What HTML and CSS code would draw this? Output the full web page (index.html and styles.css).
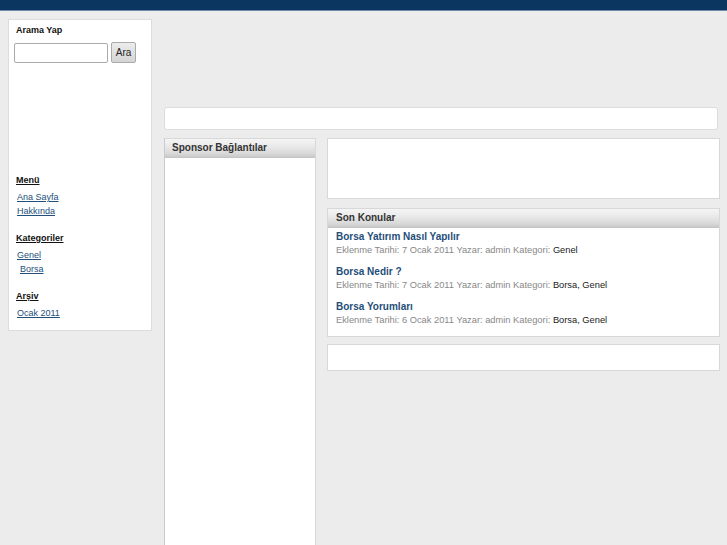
FILE: index.html
```html
<!DOCTYPE html>
<html lang="tr">
<head>
<meta charset="utf-8">
<title>Borsa</title>
<link rel="stylesheet" href="styles.css">
</head>
<body>
<div class="topbar"></div>
<div class="page">
  <aside class="sidebar">
    <h3 class="search-title">Arama Yap</h3>
    <form class="search">
      <input type="text" class="search-input">
      <button type="button" class="search-btn">Ara</button>
    </form>
    <div class="side-gap"></div>
    <h4 class="side-head">Menü</h4>
    <ul class="side-list">
      <li><a href="#">Ana Sayfa</a></li>
      <li><a href="#">Hakkında</a></li>
    </ul>
    <h4 class="side-head">Kategoriler</h4>
    <ul class="side-list">
      <li><a href="#">Genel</a></li>
      <li class="indent"><a href="#">Borsa</a></li>
    </ul>
    <h4 class="side-head">Arşiv</h4>
    <ul class="side-list">
      <li><a href="#">Ocak 2011</a></li>
    </ul>
  </aside>
  <main class="main">
    <div class="banner-space"></div>
    <div class="bar"></div>
    <div class="cols">
      <section class="sponsor">
        <div class="box-head">Sponsor Bağlantılar</div>
      </section>
      <div class="right">
        <div class="box ad"></div>
        <section class="box recent">
          <div class="box-head">Son Konular</div>
          <div class="posts">
            <div class="post">
              <a class="post-title" href="#">Borsa Yatırım Nasıl Yapılır</a>
              <div class="meta">Eklenme Tarihi: 7 Ocak 2011 Yazar: admin Kategori: <span class="cat">Genel</span></div>
            </div>
            <div class="post">
              <a class="post-title" href="#">Borsa Nedir ?</a>
              <div class="meta">Eklenme Tarihi: 7 Ocak 2011 Yazar: admin Kategori: <span class="cat">Borsa, Genel</span></div>
            </div>
            <div class="post">
              <a class="post-title" href="#">Borsa Yorumları</a>
              <div class="meta">Eklenme Tarihi: 6 Ocak 2011 Yazar: admin Kategori: <span class="cat">Borsa, Genel</span></div>
            </div>
          </div>
        </section>
        <div class="box small"></div>
      </div>
    </div>
  </main>
</div>
</body>
</html>
```
FILE: styles.css
```css
* { box-sizing: border-box; }
html, body { margin: 0; padding: 0; }
body {
  background: #ececec;
  font-family: "Liberation Sans", Arial, sans-serif;
  font-size: 10px;
  color: #333;
  overflow: hidden;
  height: 545px;
}
.topbar {
  height: 11px;
  background: #0b365f;
  border-bottom: 1px solid #6e8aa8;
}
.page {
  display: flex;
  align-items: flex-start;
  padding: 8px 8px 0 8px;
  gap: 12px;
}
.sidebar {
  width: 144px;
  flex: none;
  background: #fff;
  border: 1px solid #dcdcdc;
  padding: 5px 7px 10px 7px;
  height: 312px;
}
.search-title {
  margin: 0 0 7px 0;
  font-size: 9px;
  font-weight: bold;
  color: #111;
}
.search {
  display: flex;
  align-items: center;
  gap: 3px;
}
.search-input {
  width: 94px;
  height: 20px;
  border: 1px solid #aaa;
  border-radius: 2px;
  padding: 0;
  margin: 0 0 0 -2px;
}
.search-btn {
  width: 25px;
  height: 21px;
  padding: 0;
  font-family: "Liberation Sans", Arial, sans-serif;
  font-size: 10px;
  color: #222;
  border: 1px solid #aaa;
  border-radius: 2px;
  background: linear-gradient(#ececec, #d4d4d4);
}
.side-gap { height: 112px; }
.side-head {
  margin: 0 0 5px 0;
  font-size: 9px;
  font-weight: bold;
  color: #111;
  text-decoration: underline;
}
.side-list {
  list-style: none;
  margin: 0 0 15px 0;
  padding: 0 0 0 1px;
}
.side-list li { line-height: 13px; }
.side-list li.indent { padding-left: 3px; }
.side-list a {
  color: #23507a;
  font-size: 9px;
  text-decoration: underline;
}
.main {
  flex: none;
  width: 556px;
  display: flex;
  flex-direction: column;
}
.banner-space { height: 88px; }
.bar {
  height: 23px;
  width: 554px;
  background: #fff;
  border: 1px solid #dcdcdc;
  border-radius: 3px;
}
.cols {
  display: flex;
  gap: 11px;
  margin-top: 8px;
  align-items: flex-start;
}
.sponsor {
  width: 152px;
  height: 420px;
  background: #fff;
  border: 1px solid #d8d8d8;
  border-left-color: #c8ccd2;
}
.box-head {
  height: 19px;
  line-height: 18px;
  padding-left: 7px;
  font-size: 10px;
  font-weight: bold;
  color: #333;
  background: linear-gradient(#f5f5f5 0%, #e8e8e8 45%, #d9d9d9 80%, #c9c9c9 100%);
  border-bottom: 1px solid #c4c4c4;
}
.right {
  width: 393px;
  display: flex;
  flex-direction: column;
  gap: 8px;
}
.box {
  background: #fff;
  border: 1px solid #d8d8d8;
}
.ad { height: 61px; margin-bottom: 1px; }
.recent { height: 129px; }
.recent .box-head { padding-left: 8px; }
.posts { padding: 2px 8px 0 8px; }
.post { margin-bottom: 8px; }
.post-title {
  display: block;
  color: #1f4e79;
  font-weight: bold;
  font-size: 10px;
  text-decoration: none;
  line-height: 13px;
}
.meta {
  color: #888;
  font-size: 9.3px;
  line-height: 13px;
  margin-top: 1px;
}
.meta .cat { color: #222; }
.small { height: 27px; margin-top: -1px; }
```
